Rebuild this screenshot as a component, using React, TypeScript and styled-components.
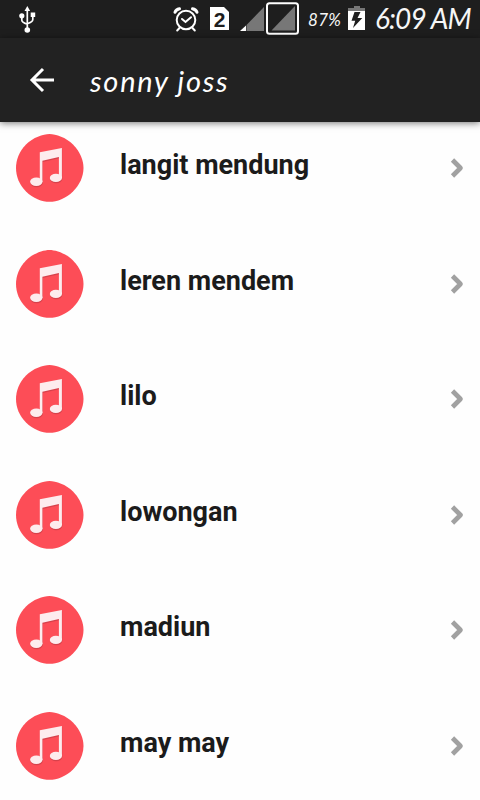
import React from "react";
import styled, { createGlobalStyle } from "styled-components";

const GlobalStyle = createGlobalStyle`
  html, body { margin: 0; background: #fefefe; overflow: hidden; }
  * { box-sizing: border-box; }
  svg { display: block; flex: none; }
`;

const Screen = styled.main`
  width: 480px;
  height: 800px;
  overflow: hidden;
  display: flex;
  flex-direction: column;
  background: #fefefe;
  font-family: Roboto, sans-serif;
`;

const StatusBar = styled.header`
  height: 38px;
  flex: none;
  display: flex;
  justify-content: space-between;
  background: #1e1e1e;
  padding-left: 16px;
`;

const StatusGroup = styled.div`
  display: flex;
`;

const StatusText = styled.span<{ $size: number; $width: number; $spacing: number; $top: number }>`
  width: ${(p) => p.$width}px;
  padding-top: ${(p) => p.$top}px;
  font: italic 400 ${(p) => p.$size}px/1 Lato, sans-serif;
  letter-spacing: ${(p) => p.$spacing}px;
  color: #f6f6f6;
  white-space: nowrap;
`;

const AppBar = styled.div`
  height: 84px;
  flex: none;
  display: flex;
  align-items: center;
  background: #222;
  box-shadow: 0 1px 7px rgba(0, 0, 0, 0.55);
  z-index: 1;
`;

const BackButton = styled.button`
  width: 90px;
  height: 84px;
  padding: 0 0 0 26px;
  border: 0;
  background: none;
`;

const Title = styled.h1`
  margin: 2px 0 0;
  font: italic 400 29px/36px Lato, sans-serif;
  letter-spacing: 1.75px;
  color: #fff;
`;

const SongList = styled.ul`
  margin: 0;
  padding: 0;
  list-style: none;
`;

const SongRow = styled.li`
  height: 115.5px;
  padding: 11px 13px 0 15px;
  display: flex;
  align-items: flex-start;
`;

const SongName = styled.span`
  flex: 1;
  margin: 16px 0 0 35px;
  font: 700 27px/32px Roboto, sans-serif;
  color: #1b1b1b;
`;

const ChevronSlot = styled.span`
  padding-top: 23.4px;
`;

const UsbIcon = () => (
  <svg width="22" height="38" fill="none" stroke="#fff" strokeWidth="1.7">
    <path d="M11.3 9v20M5.8 16v4q0 2.5 5.5 4.2M16.8 16v3.5q0 2.5-5.5 4.2" />
    <path d="M11.3 6l2.8 5h-5.6z" fill="#fff" stroke="none" />
    <circle cx="5.8" cy="15.8" r="2.6" fill="#fff" stroke="none" />
    <path d="M14.7 12.5h4.5v4.5h-4.5z" fill="#fff" stroke="none" />
    <circle cx="11.3" cy="30" r="2.8" fill="#fff" stroke="none" />
  </svg>
);

const AlarmIcon = () => (
  <svg width="38" height="38" fill="none" stroke="#fff" strokeLinecap="round">
    <circle cx="14" cy="20" r="9.3" strokeWidth="2" />
    <path d="M10 19l3.5 3 5.5-4.8" strokeWidth="2" />
    <path d="M3 12.3q1-2.8 4.5-3.5M25 12.3q-1-2.8-4.5-3.5" strokeWidth="3" />
    <path d="M7.500 28l-2.300 2.500M20.500 28l2.300 2.500" strokeWidth="2" />
  </svg>
);

const SimBadge = styled.span`
  width: 19px;
  height: 23px;
  margin: 7px 11px 0 0;
  background: #fff;
  clip-path: polygon(0 0, 14px 0, 100% 5px, 100% 100%, 0 100%);
  font: 700 21px/25px "Liberation Sans", sans-serif;
  color: #1e1e1e;
  text-align: center;
`;

const SignalIcons = () => (
  <svg width="68" height="38">
    <path d="M6.500 25L24 7v24H6.500z" fill="#777" />
    <path d="M0 31l6-5.500V31z" fill="#fff" />
    <rect x="27" y="3.200" width="31" height="30.500" rx="2.500" fill="#1e1e1e" stroke="#fff" strokeWidth="2" />
    <path d="M31.500 30.500L55 6v24.500z" fill="#777" />
  </svg>
);

const BatteryIcon = () => (
  <svg width="27" height="38">
    <path d="M6 6h6v2h5v3.500H0V8h6z" fill="#777" />
    <path d="M0 11h17v19H0z" fill="#fff" />
    <path d="M6.500 12h6l-3 6h4.800L5 28l2.200-7.200H3.500z" fill="#1e1e1e" />
  </svg>
);

const ArrowLeft = () => (
  <svg width="32" height="84" fill="none" stroke="#fff" strokeWidth="3">
    <path d="M28 42H6.500M17 31L6 42l11 11" />
  </svg>
);

const MusicIcon = () => (
  <svg width="70" height="70" viewBox="0 0 70 70">
    <path
      d="M34.500 1C41 1 51 4.500 58 11.500C65 18.500 68.500 27 68.500 35C68.500 43 65 51.500 58 58.500C51 65.500 42 68.800 34.500 68.800C27 68.800 18 65.500 11 58.500C4 51.500 1 43 1 35C1 27 4 18.500 11 11.500C18 4.500 28 1 34.500 1Z"
      fill="#fd4d57"
    />
    <g transform="translate(0.300 1.200)" fill="#b93942" opacity=".55">
      <path d="M24.800 19.300L46.900 15v30h-3V24L27.400 27.700V49h-2.600z" />
      <ellipse cx="21.300" cy="48.800" rx="6.200" ry="4.200" />
      <ellipse cx="40.900" cy="44.900" rx="6.100" ry="4.200" />
    </g>
    <g fill="#fdecee">
      <path d="M24.800 19.300L46.900 15v30h-3V24L27.400 27.700V49h-2.600z" />
      <ellipse cx="21.300" cy="48.800" rx="6.200" ry="4.200" />
      <ellipse cx="40.900" cy="44.900" rx="6.100" ry="4.200" />
    </g>
  </svg>
);

const Chevron = () => (
  <svg width="18" height="24" fill="none" stroke="#a1a1a1" strokeWidth="4.600">
    <path d="M3.500 4L11.500 12 3.500 20" strokeLinejoin="round" />
  </svg>
);

const songs = ["langit mendung", "leren mendem", "lilo", "lowongan", "madiun", "may may"];

export default function App() {
  return (
    <Screen>
      <GlobalStyle />
      <StatusBar>
        <UsbIcon />
        <StatusGroup>
          <AlarmIcon />
          <SimBadge>2</SimBadge>
          <SignalIcons />
          <StatusText $size={17} $width={40} $spacing={0.3} $top={11}>87%</StatusText>
          <BatteryIcon />
          <StatusText $size={28} $width={105} $spacing={-0.9} $top={4}>6:09 AM</StatusText>
        </StatusGroup>
      </StatusBar>
      <AppBar>
        <BackButton aria-label="Back">
          <ArrowLeft />
        </BackButton>
        <Title>sonny joss</Title>
      </AppBar>
      <SongList>
        {songs.map((song) => (
          <SongRow key={song}>
            <MusicIcon />
            <SongName>{song}</SongName>
            <ChevronSlot>
              <Chevron />
            </ChevronSlot>
          </SongRow>
        ))}
      </SongList>
    </Screen>
  );
}
